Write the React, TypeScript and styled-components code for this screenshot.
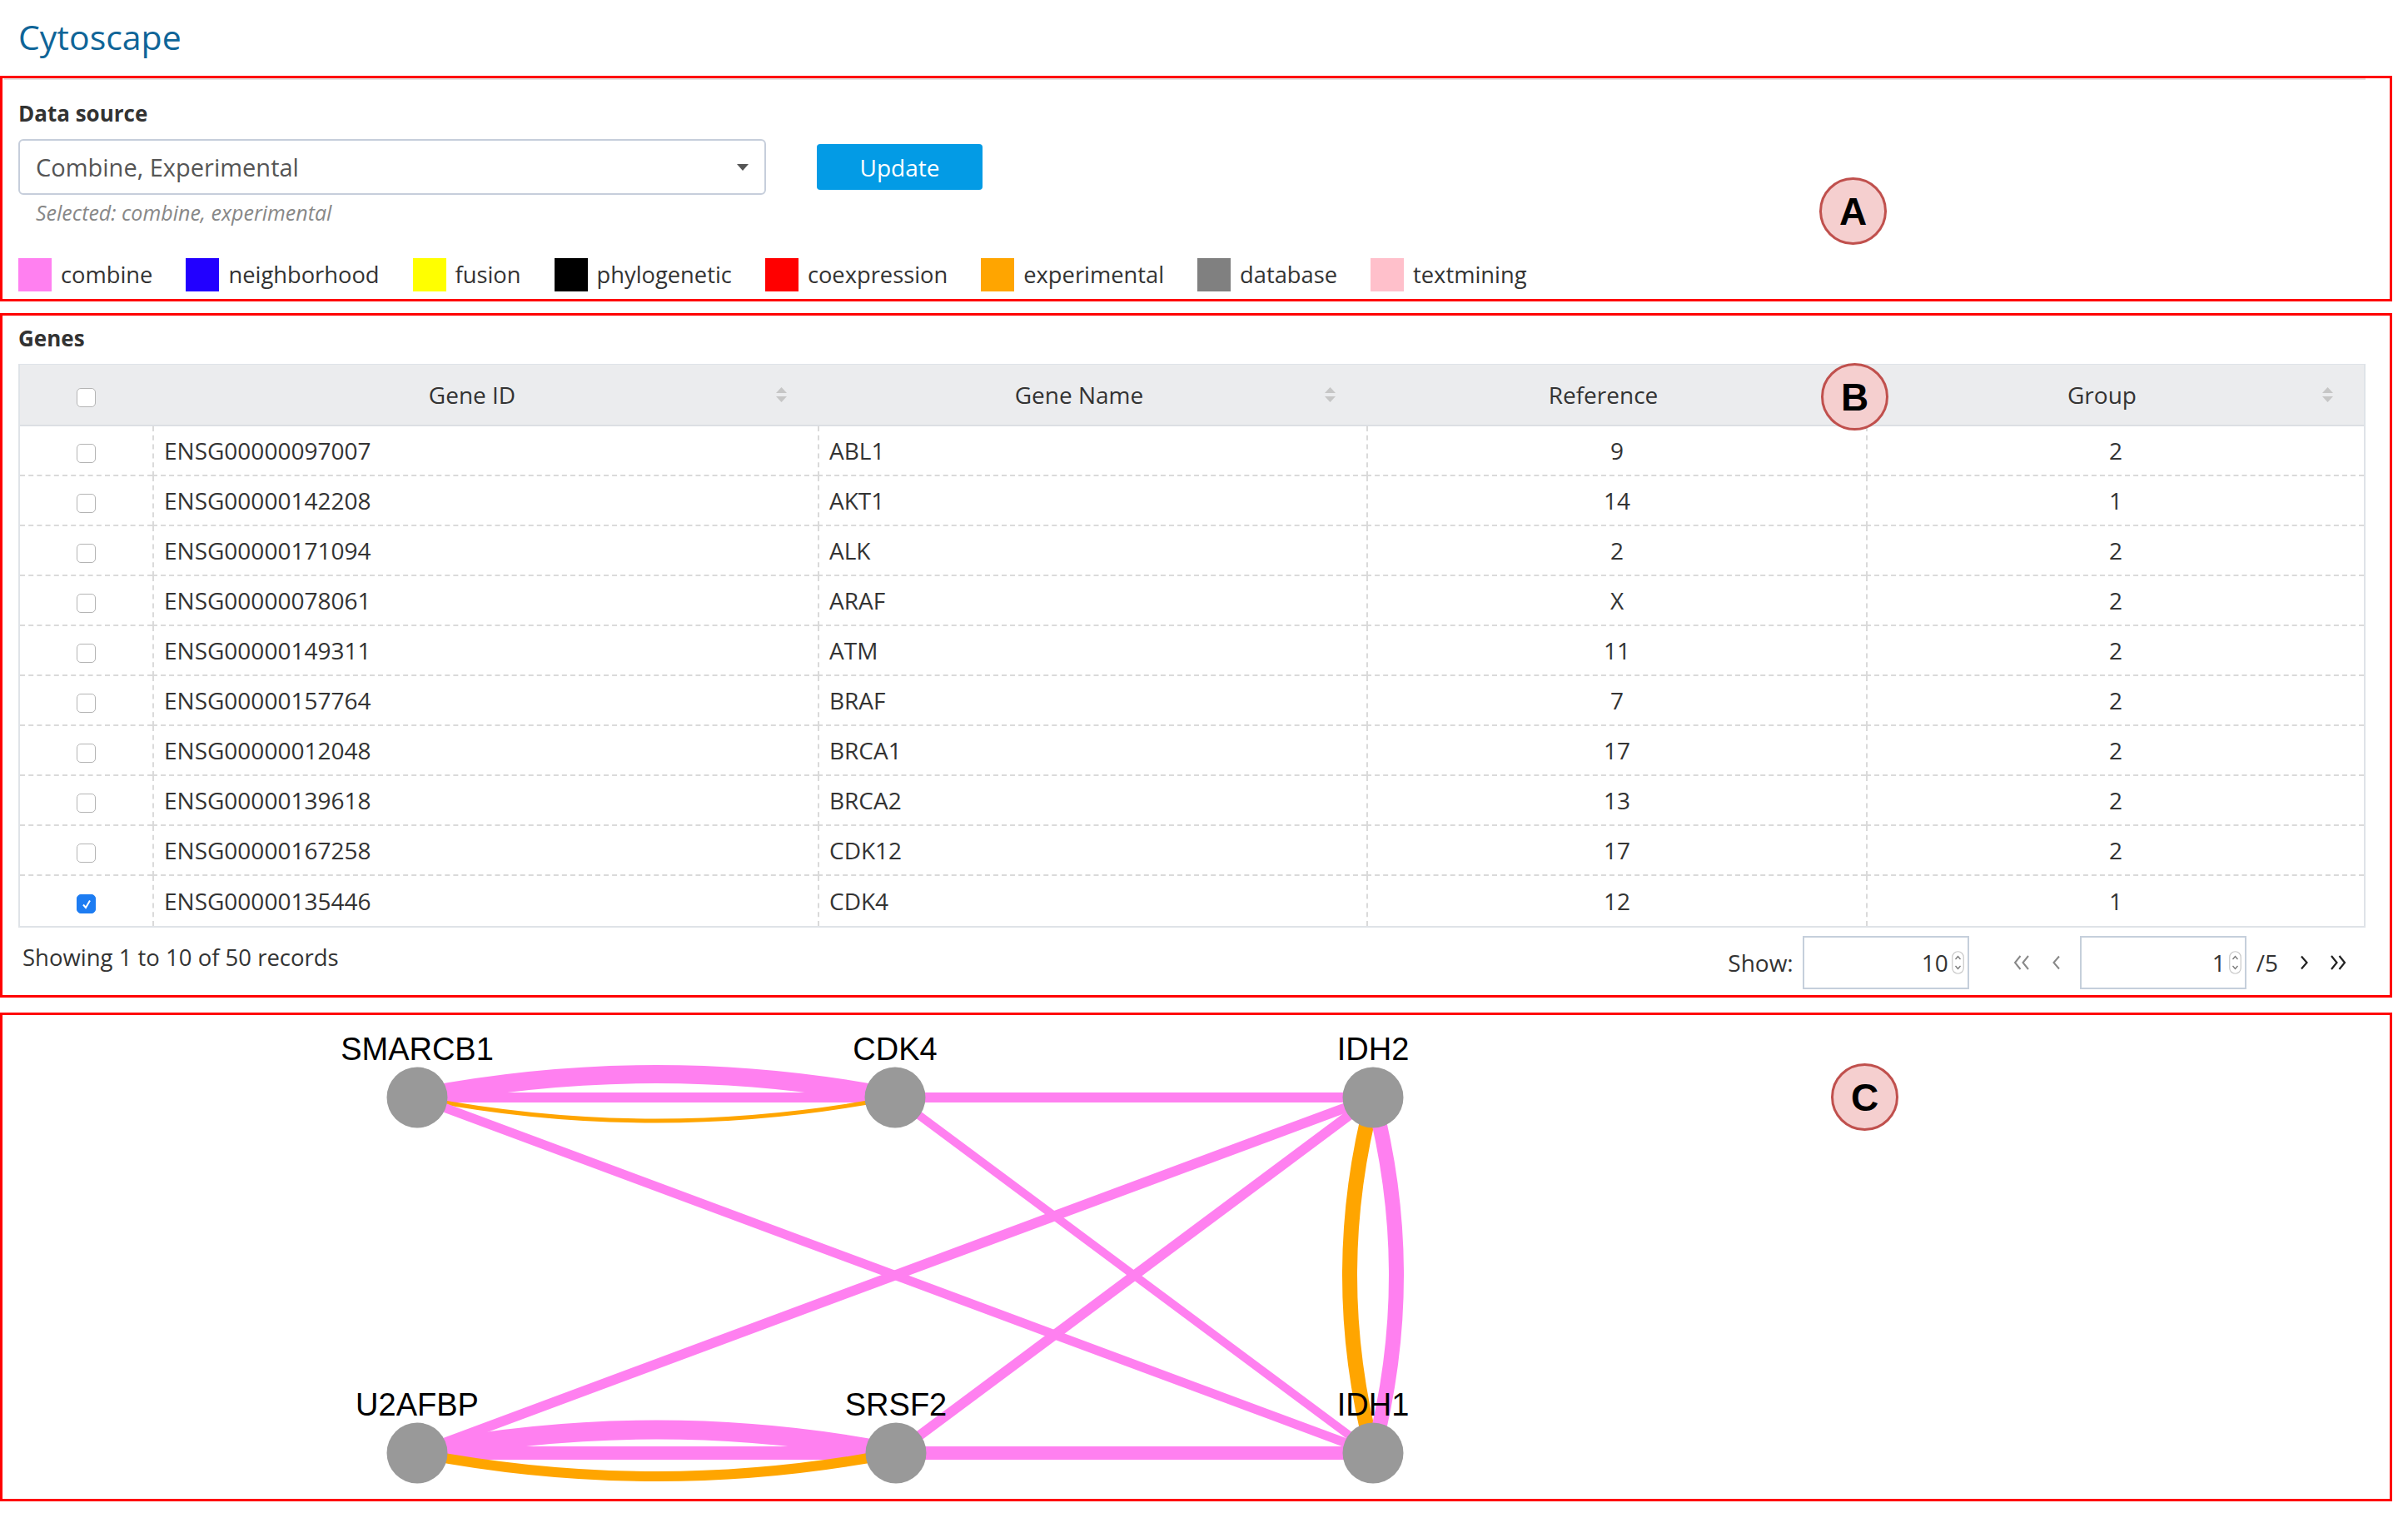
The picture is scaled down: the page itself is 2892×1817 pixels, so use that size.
import React from "react";
import styled, { createGlobalStyle } from "styled-components";

const GlobalStyle = createGlobalStyle`
  html, body { margin: 0; padding: 0; background: #fff; }
  body { font-family: "Open Sans", "Liberation Sans", sans-serif; color: #333; }
  * { box-sizing: border-box; }
`;

const Page = styled.div`
  width: 2892px;
  padding: 0 19px 15px 0;
`;

const Title = styled.h1`
  margin: 0 0 23px 22px;
  padding-top: 20px;
  font-size: 41px;
  line-height: 48px;
  font-weight: 400;
  color: #0f6598;
`;

const Section = styled.section<{ $mt?: number; $pad?: string }>`
  position: relative;
  margin-top: ${(p) => p.$mt ?? 0}px;
  border: 3px solid #ff0000;
  padding: ${(p) => p.$pad ?? "0 29px 0 19px"};
`;

const TopRule = styled.div`
  margin-left: -17px;
  border-top: 2px solid #e4e4e4;
`;

const Label = styled.div<{ $mt: number }>`
  margin-top: ${(p) => p.$mt}px;
  font-size: 26px;
  line-height: 36px;
  font-weight: 700;
  color: #333;
`;

const SelectRow = styled.div`
  display: flex;
  align-items: center;
  margin-top: 13px;
`;

const SelectBox = styled.div`
  width: 898px;
  height: 67px;
  border: 2px solid #c6cedb;
  border-radius: 6px;
  display: flex;
  align-items: center;
  justify-content: space-between;
  padding: 0 19px 0 19px;
  font-size: 29px;
  line-height: 40px;
  color: #555;
`;

const Caret = styled.span`
  width: 0;
  height: 0;
  border-left: 7px solid transparent;
  border-right: 7px solid transparent;
  border-top: 8px solid #555;
`;

const UpdateButton = styled.button`
  margin-left: 61px;
  width: 199px;
  height: 55px;
  border: none;
  border-radius: 4px;
  background: #039be5;
  color: #fff;
  font-family: "Open Sans", "Liberation Sans", sans-serif;
  font-size: 28px;
  padding: 0;
`;

const Hint = styled.div`
  margin-top: 6px;
  padding-left: 21px;
  font-size: 25px;
  line-height: 30px;
  font-style: italic;
  color: #888;
`;

const Legend = styled.div`
  display: flex;
  align-items: center;
  gap: 40px;
  margin-top: 40px;
  padding-bottom: 9px;
`;

const LegendItem = styled.div`
  display: flex;
  align-items: center;
  gap: 11px;
  font-size: 27.3px;
  line-height: 40px;
  color: #333;
`;

const Swatch = styled.span<{ $color: string }>`
  width: 40px;
  height: 40px;
  background: ${(p) => p.$color};
`;

const Badge = styled.div<{ $x: number; $y: number }>`
  position: absolute;
  left: ${(p) => p.$x}px;
  top: ${(p) => p.$y}px;
  width: 81px;
  height: 81px;
  border-radius: 50%;
  background: #f5cfcf;
  border: 3px solid #c0504d;
  display: flex;
  align-items: center;
  justify-content: center;
  font-family: "Liberation Sans", Arial, sans-serif;
  font-weight: 700;
  font-size: 46px;
  color: #000;
`;

const TableWrap = styled.div`
  margin-top: 13px;
`;

const GeneTable = styled.table`
  width: 100%;
  border-collapse: separate;
  border-spacing: 0;
  border: 2px solid #dfe3e8;
  border-top: 1px solid #dfe3e8;
  table-layout: fixed;
  font-size: 28px;
  color: #333;
`;

const HeadCell = styled.th`
  height: 74px;
  background: #ebecee;
  border-bottom: 2px solid #dcdfe3;
  font-weight: 400;
  padding: 0;
`;

const HeadInner = styled.div`
  display: grid;
  grid-template-columns: 1fr 15px;
  align-items: center;
  padding: 0 36px 0 20px;
`;

const HeadText = styled.span`
  justify-self: center;
  line-height: 40px;
`;

const Cell = styled.td<{ $align?: string }>`
  height: 60px;
  padding: 0 12px;
  text-align: ${(p) => p.$align ?? "left"};
  border-bottom: 2px dashed #dadada;
  border-left: 2px dashed #dadada;
  line-height: 40px;
  &:first-child {
    border-left: none;
    text-align: center;
  }
  tr:last-child > & {
    border-bottom: none;
  }
`;

const CheckCellHead = styled.th`
  height: 74px;
  background: #ebecee;
  border-bottom: 2px solid #dcdfe3;
  padding: 0;
  text-align: center;
`;

const Check = styled.span<{ $checked?: boolean }>`
  display: inline-flex;
  align-items: center;
  justify-content: center;
  width: 23px;
  height: 23px;
  border-radius: 5px;
  border: 1.5px solid ${(p) => (p.$checked ? "#1d7cf2" : "#b4b4b4")};
  background: ${(p) => (p.$checked ? "#1d7cf2" : "#fff")};
  vertical-align: middle;
`;

const Footer = styled.div`
  display: flex;
  justify-content: space-between;
  align-items: center;
  margin-top: 10px;
  height: 64px;
  padding: 0 23px 0 5px;
  margin-bottom: 7px;
`;

const Records = styled.div`
  align-self: flex-start;
  margin-top: 7px;
  font-size: 27.5px;
  line-height: 38px;
  color: #333;
`;

const Pager = styled.div`
  display: flex;
  align-items: center;
  font-size: 28px;
  color: #333;
`;

const PagerText = styled.span<{ $ml?: number }>`
  margin-left: ${(p) => p.$ml ?? 0}px;
  line-height: 38px;
`;

const NumberBox = styled.div<{ $ml: number }>`
  margin-left: ${(p) => p.$ml}px;
  width: 200px;
  height: 64px;
  border: 2px solid #c5cfdb;
  display: flex;
  align-items: center;
  justify-content: flex-end;
  gap: 4px;
  padding-right: 4px;
  font-size: 28px;
  color: #333;
`;

const NavIcon = styled.svg<{ $ml: number }>`
  margin-left: ${(p) => p.$ml}px;
  display: block;
`;

const GraphCanvas = styled.svg`
  display: block;
  width: 100%;
  height: 581px;
`;

const legend: [string, string][] = [
  ["combine", "#ff80f0"],
  ["neighborhood", "#2200ff"],
  ["fusion", "#ffff00"],
  ["phylogenetic", "#000000"],
  ["coexpression", "#ff0000"],
  ["experimental", "#ffa500"],
  ["database", "#808080"],
  ["textmining", "#ffc0cb"],
];

const rows: [string, string, string, string, boolean][] = [
  ["ENSG00000097007", "ABL1", "9", "2", false],
  ["ENSG00000142208", "AKT1", "14", "1", false],
  ["ENSG00000171094", "ALK", "2", "2", false],
  ["ENSG00000078061", "ARAF", "X", "2", false],
  ["ENSG00000149311", "ATM", "11", "2", false],
  ["ENSG00000157764", "BRAF", "7", "2", false],
  ["ENSG00000012048", "BRCA1", "17", "2", false],
  ["ENSG00000139618", "BRCA2", "13", "2", false],
  ["ENSG00000167258", "CDK12", "17", "2", false],
  ["ENSG00000135446", "CDK4", "12", "1", true],
];

const SortIcon = ({ hidden }: { hidden?: boolean }) => (
  <svg width="15" height="20" viewBox="0 0 15 20" style={{ visibility: hidden ? "hidden" : "visible" }}>
    <polygon points="1,8 7.5,1 14,8" fill="#c6c6c6" />
    <polygon points="1,12 14,12 7.5,19" fill="#c6c6c6" />
  </svg>
);

const Spinner = () => (
  <svg width="15" height="28" viewBox="0 0 15 28">
    <rect x="0.75" y="0.75" width="13.5" height="26.5" rx="6.75" fill="#fff" stroke="#c8c8c8" strokeWidth="1.2" />
    <polyline points="4.5,10 7.5,6.5 10.5,10" fill="none" stroke="#777" strokeWidth="1.3" />
    <polyline points="4.5,18 7.5,21.5 10.5,18" fill="none" stroke="#777" strokeWidth="1.3" />
  </svg>
);

type Pt = [number, number];
const N: Record<string, Pt> = {
  SMARCB1: [498, 99],
  CDK4: [1072, 99],
  IDH2: [1646, 99],
  U2AFBP: [498, 526],
  SRSF2: [1073, 526],
  IDH1: [1646, 526],
};

const PINK = "#ff80f0";
const ORANGE = "#ffa500";

const edges: [string, string, string, number, number][] = [
  ["SMARCB1", "CDK4", PINK, 12, 0],
  ["SMARCB1", "CDK4", PINK, 22, -28],
  ["SMARCB1", "CDK4", ORANGE, 5, 28],
  ["CDK4", "IDH2", PINK, 12, 0],
  ["SMARCB1", "IDH1", PINK, 11, 0],
  ["CDK4", "IDH1", PINK, 10, 0],
  ["IDH2", "U2AFBP", PINK, 12, 0],
  ["IDH2", "SRSF2", PINK, 12, 0],
  ["IDH2", "IDH1", ORANGE, 18, 28],
  ["IDH2", "IDH1", PINK, 18, -28],
  ["U2AFBP", "SRSF2", PINK, 23, -28],
  ["U2AFBP", "SRSF2", PINK, 16, 0],
  ["U2AFBP", "SRSF2", ORANGE, 12, 28],
  ["SRSF2", "IDH1", PINK, 16, 0],
];

function edgePath(a: Pt, b: Pt, d: number) {
  if (!d) return `M${a[0]} ${a[1]} L${b[0]} ${b[1]}`;
  const mx = (a[0] + b[0]) / 2;
  const my = (a[1] + b[1]) / 2;
  const dx = b[0] - a[0];
  const dy = b[1] - a[1];
  const len = Math.hypot(dx, dy);
  const nx = -dy / len;
  const ny = dx / len;
  return `M${a[0]} ${a[1]} Q${mx + nx * 2 * d} ${my + ny * 2 * d} ${b[0]} ${b[1]}`;
}

const Graph = () => (
  <GraphCanvas>
    {edges.map(([f, t, c, w, d], i) => (
      <path key={i} d={edgePath(N[f], N[t], d)} stroke={c} strokeWidth={w} fill="none" />
    ))}
    {Object.entries(N).map(([k, [x, y]]) => (
      <circle key={k} cx={x} cy={y} r={36.5} fill="#999999" />
    ))}
    {Object.entries(N).map(([k, [x, y]]) => (
      <text
        key={k + "l"}
        x={x}
        y={y - 45}
        textAnchor="middle"
        fontFamily="'Liberation Sans', Arial, sans-serif"
        fontSize="38"
        fill="#000"
      >
        {k}
      </text>
    ))}
  </GraphCanvas>
);

export default function App() {
  return (
    <Page>
      <GlobalStyle />
      <Title>Cytoscape</Title>

      <Section>
        <TopRule />
        <Label $mt={22}>Data source</Label>
        <SelectRow>
          <SelectBox>
            <span>Combine, Experimental</span>
            <Caret />
          </SelectBox>
          <UpdateButton>Update</UpdateButton>
        </SelectRow>
        <Hint>Selected: combine, experimental</Hint>
        <Legend>
          {legend.map(([name, color]) => (
            <LegendItem key={name}>
              <Swatch $color={color} />
              {name}
            </LegendItem>
          ))}
        </Legend>
        <Badge $x={2182} $y={119}>A</Badge>
      </Section>

      <Section $mt={14}>
        <Label $mt={9}>Genes</Label>
        <TableWrap>
          <GeneTable>
            <colgroup>
              <col style={{ width: 159 }} />
              <col style={{ width: 799 }} />
              <col style={{ width: 659 }} />
              <col style={{ width: 600 }} />
              <col />
            </colgroup>
            <thead>
              <tr>
                <CheckCellHead>
                  <Check />
                </CheckCellHead>
                {[
                  ["Gene ID", true],
                  ["Gene Name", true],
                  ["Reference", false],
                  ["Group", true],
                ].map(([label, sortable]) => (
                  <HeadCell key={label as string}>
                    <HeadInner>
                      <HeadText>{label as string}</HeadText>
                      <SortIcon hidden={!sortable} />
                    </HeadInner>
                  </HeadCell>
                ))}
              </tr>
            </thead>
            <tbody>
              {rows.map(([id, name, ref, group, checked]) => (
                <tr key={id}>
                  <Cell>
                    <Check $checked={checked}>
                      {checked && (
                        <svg width="14" height="14" viewBox="0 0 14 14">
                          <polyline points="3,7.5 6,11 11,2.5" fill="none" stroke="#fff" strokeWidth="2" />
                        </svg>
                      )}
                    </Check>
                  </Cell>
                  <Cell>{id}</Cell>
                  <Cell>{name}</Cell>
                  <Cell $align="center">{ref}</Cell>
                  <Cell $align="center">{group}</Cell>
                </tr>
              ))}
            </tbody>
          </GeneTable>
        </TableWrap>
        <Footer>
          <Records>Showing 1 to 10 of 50 records</Records>
          <Pager>
            <PagerText>Show:</PagerText>
            <NumberBox $ml={11}>
              <span>10</span>
              <Spinner />
            </NumberBox>
            <NavIcon $ml={53} width="20" height="18" viewBox="0 0 20 18">
              <polyline points="8.5,1 2,9 8.5,17" fill="none" stroke="#888" strokeWidth="2" />
              <polyline points="18,1 11.5,9 18,17" fill="none" stroke="#888" strokeWidth="2" />
            </NavIcon>
            <NavIcon $ml={26} width="11" height="18" viewBox="0 0 11 18">
              <polyline points="9,1.5 2.5,9 9,16.5" fill="none" stroke="#888" strokeWidth="2" />
            </NavIcon>
            <NumberBox $ml={23}>
              <span>1</span>
              <Spinner />
            </NumberBox>
            <PagerText $ml={12}>/5</PagerText>
            <NavIcon $ml={26} width="11" height="18" viewBox="0 0 11 18">
              <polyline points="2,1.5 8.5,9 2,16.5" fill="none" stroke="#222" strokeWidth="2.2" />
            </NavIcon>
            <NavIcon $ml={25} width="20" height="18" viewBox="0 0 20 18">
              <polyline points="2,1 8.5,9 2,17" fill="none" stroke="#222" strokeWidth="2.2" />
              <polyline points="11.5,1 18,9 11.5,17" fill="none" stroke="#222" strokeWidth="2.2" />
            </NavIcon>
          </Pager>
        </Footer>
        <Badge $x={2184} $y={57}>B</Badge>
      </Section>

      <Section $mt={18} $pad="0">
        <Graph />
        <Badge $x={2196} $y={58}>C</Badge>
      </Section>
    </Page>
  );
}
